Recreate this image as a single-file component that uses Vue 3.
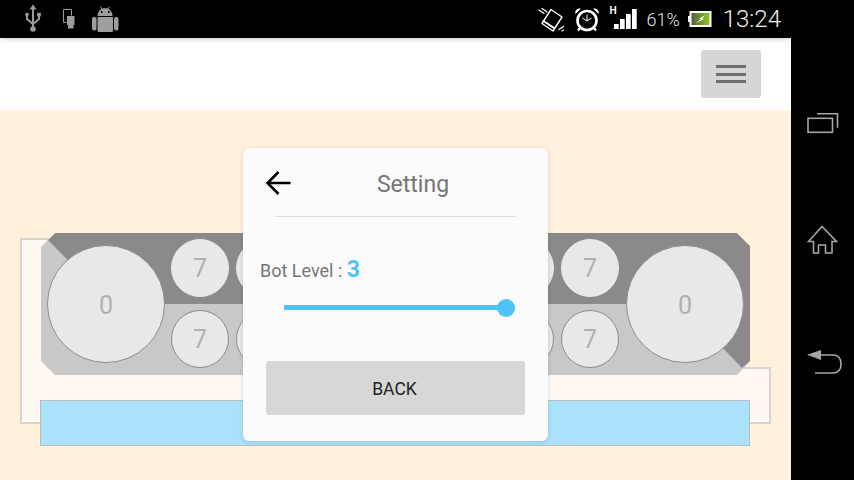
<script setup>
// Only the outermost pits show their count; the dialog covers the rest.
const pits = [7, null, null, null, null, null, 7]
</script>

<template>
  <div class="screen">
    <div class="main">
      <header class="status">
        <svg class="status-left" width="130" height="38" viewBox="0 0 130 38">
          <g class="usb" fill="none" stroke="#9c9c9c" stroke-width="2">
            <path d="M33 8v20M27 15v4l6 5M39 15v4l-6 5" />
            <path d="M33 4.500l3.500 5h-7z" fill="#9c9c9c" stroke="none" />
            <circle cx="27" cy="14.500" r="1.800" fill="#9c9c9c" stroke="none" />
            <rect x="37.200" y="12.800" width="3.600" height="3.600" fill="#9c9c9c" stroke="none" />
            <circle cx="33" cy="29" r="2.800" fill="#9c9c9c" stroke="none" />
          </g>
          <path d="M71.500 15.500V9.500h-8v13h3" fill="none" stroke="#9c9c9c" stroke-width="1" />
          <path d="M67 16h7.500v9h-1v3.500h-5.500V25h-1z" fill="#9c9c9c" />
          <g fill="#9e9e9e">
            <rect x="92" y="17" width="4.500" height="13.500" rx="2" />
            <rect x="114" y="17" width="4.500" height="13.500" rx="2" />
            <path d="M97.500 17h15.500v13.500a1.500 1.500 0 0 1-1.500 1.500h-12.500a1.500 1.500 0 0 1-1.500-1.500z" />
            <path d="M97.500 16c0-3.500 2-6 4-7l-1.500-2.300.6-.4 1.600 2.300c1.800-.6 3.800-.6 5.600 0l1.600-2.300.6.4-1.500 2.300c2 1 4 3.500 4 7z" />
          </g>
          <circle cx="101.700" cy="12" r="1" fill="#000" />
          <circle cx="108.800" cy="12" r="1" fill="#000" />
        </svg>
        <div class="status-right">
          <svg width="100" height="38" viewBox="540 0 100 38">
            <g fill="none" stroke="#fff" stroke-linecap="round">
              <path d="M553 9.500l11 7.500-9 14-11-7.500z" stroke-width="1.400" stroke-linejoin="round" />
              <path d="M545.500 21l10.500 7" stroke-width="2" />
              <path d="M541 10l5 3.500M544 8.500l5 3.500M561 29.500l4.500-3M564 31l1.500-1" stroke-width="1.300" />
            </g>
            <g fill="none" stroke="#fff">
              <circle cx="589" cy="20.500" r="9.500" stroke-width="2.600" />
              <path d="M589 14.500v6.500l-4.500-3M589 21l4.500-3" stroke-width="1" />
              <path d="M580 30.500l2-2.500M598 30.500l-2-2.500" stroke-width="2.200" />
            </g>
            <path d="M577.500 14c-1-3.500 1.500-6 5.500-5.500zM600.500 14c1-3.500-1.500-6-5.500-5.500z" fill="#fff" />
            <text x="611.500" y="14" class="net">H</text>
            <g fill="#fff">
              <rect x="616" y="24" width="4.700" height="5" />
              <rect x="622" y="19" width="4.700" height="10" />
              <rect x="628" y="14" width="4.700" height="15" />
              <rect x="634" y="9" width="4.700" height="20" />
            </g>
          </svg>
          <span class="percent">61%</span>
          <svg class="battery" width="24" height="16" viewBox="0 0 24 16">
            <defs>
              <linearGradient id="cell" x1="0" y1="0" x2="1" y2="0">
                <stop offset="0" stop-color="#55554a" />
                <stop offset=".4" stop-color="#6d8a2c" />
                <stop offset="1" stop-color="#8fcb26" />
              </linearGradient>
            </defs>
            <rect x="0" y="5" width="2.500" height="6" fill="#fff" />
            <rect x="2.500" y="1" width="20" height="14" fill="url(#cell)" stroke="#fff" stroke-width="2" />
            <path d="M8 11.500l4.500-3-1-1 6-3.500-3 3.500 1 1-7 3z" fill="#fff" />
          </svg>
          <span class="clock">13:24</span>
        </div>
      </header>

      <div class="toolbar">
        <button class="menu"><i></i><i></i><i></i></button>
      </div>

      <main class="game">
        <div class="tray tray-left"></div>
        <div class="tray tray-right"></div>
        <div class="tray-fill"></div>

        <section class="board">
          <div class="dark"></div>
          <div class="store"><span>0</span></div>
          <div class="rows">
            <div class="row">
              <div v-for="(p, i) in pits" :key="'t' + i" class="pit top"><span v-if="p">{{ p }}</span></div>
            </div>
            <div class="row">
              <div v-for="(p, i) in pits" :key="'b' + i" class="pit"><span v-if="p">{{ p }}</span></div>
            </div>
          </div>
          <div class="store store-right"><span>0</span></div>
        </section>

        <div class="bar"></div>

        <div class="dialog">
          <div class="head">
            <button class="arrow">
              <svg width="26" height="26" viewBox="0 0 26 26">
                <path d="M24.500 13H2M12.500 2L1.500 13 12.500 24" fill="none" stroke="#000" stroke-width="2.600" />
              </svg>
            </button>
            <h2>Setting</h2>
          </div>
          <div class="level">
            <span>Bot Level : </span><b>3</b>
          </div>
          <div class="slider"><div class="thumb"></div></div>
          <button class="back">BACK</button>
        </div>
      </main>
    </div>

    <aside class="nav">
      <svg width="63" height="480" viewBox="791 0 63 480" fill="none" stroke="#a6a6a6" stroke-width="1.600">
        <rect x="808" y="118.300" width="24.500" height="14" />
        <path d="M817 113.800h20.500v14" />
        <path d="M808.500 241.500L822 226.500l14.500 15h-4.500v11.500h-6.500v-8h-7v8H813.500v-11.500z" />
        <path d="M821 355h12c5 0 8 3 8 9s-3 9-8 9h-18" />
        <path d="M807 354.800l14-4.800v10z" fill="#a6a6a6" stroke="none" />
      </svg>
    </aside>
  </div>
</template>

<style scoped>
.screen {
  display: flex;
  width: 854px;
  height: 480px;
  background: #000;
  overflow: hidden;
  font-family: Roboto, sans-serif;
}
.main {
  width: 791px;
  display: flex;
  flex-direction: column;
}
.status {
  position: relative;
  z-index: 2;
  height: 38px;
  flex: none;
  display: flex;
  justify-content: space-between;
  background: #000;
  box-shadow: 0 1px 5px rgba(0, 0, 0, .22);
}
.status-right {
  display: flex;
  align-items: flex-start;
}
.percent {
  margin: 7px 0 0 8px;
  font-size: 18px;
  line-height: 25px;
  font-weight: 300;
  color: #e4e4e4;
}
.battery {
  margin: 11px 0 0 8px;
}
.clock {
  margin: 5px 10px 0 11px;
  font-size: 24px;
  line-height: 29px;
  font-weight: 300;
  color: #f2f2f2;
}
.net {
  font: 700 10px "Liberation Sans", sans-serif;
  fill: #fff;
}
.toolbar {
  height: 72px;
  flex: none;
  box-sizing: border-box;
  background: #fff;
  display: flex;
  justify-content: flex-end;
  padding: 12px 30px;
}
.menu {
  width: 60px;
  height: 48px;
  padding: 0;
  border: 0;
  border-radius: 3px;
  background: #d5d7d6;
  display: flex;
  flex-direction: column;
  align-items: center;
  justify-content: center;
  gap: 4.500px;
}
.menu i {
  width: 30px;
  height: 3px;
  background: #6e6f6f;
}
.game {
  position: relative;
  flex: 1;
  background: #fff1dc;
  padding: 123px 0 0 41px;
}
.tray {
  position: absolute;
  box-sizing: border-box;
  background: #fff8f2;
  border: 2px solid #d8d3cc;
}
.tray-left {
  left: 20px;
  top: 128px;
  width: 60px;
  height: 186px;
}
.tray-right {
  left: 710px;
  top: 257px;
  width: 61px;
  height: 57px;
}
.tray-fill {
  position: absolute;
  left: 30px;
  top: 260px;
  width: 700px;
  height: 40px;
  background: #fff8f2;
}
.board {
  position: relative;
  width: 709px;
  height: 142px;
  box-sizing: border-box;
  padding: 6px 5px 0 6px;
  display: flex;
  align-items: flex-start;
  gap: 6px;
  background: #c8c8c8;
  clip-path: polygon(14px 0, 696px 0, 709px 13px, 709px 128px, 696px 142px, 14px 142px, 0 128px, 0 14px);
}
.dark {
  position: absolute;
  inset: 0;
  background: #8a8a8a;
  clip-path: polygon(7px 7px, 14px 0, 696px 0, 709px 13px, 709px 128px, 701px 135px, 640px 71px, 70px 71px);
}
.store {
  position: relative;
  width: 118px;
  height: 118px;
  margin-top: 6px;
  padding-top: 2px;
  flex: none;
  box-sizing: border-box;
  border: 1px solid #8c8c8c;
  border-radius: 50%;
  background: #e8e8e8;
  display: flex;
  align-items: center;
  justify-content: center;
  font-size: 25px;
  color: #b0b0b0;
}
.store-right {
  margin-left: 1px;
}
.rows {
  position: relative;
  display: flex;
  flex-direction: column;
  gap: 13px;
  flex: none;
}
.row {
  display: flex;
  gap: 7px;
}
.pit {
  width: 58px;
  height: 58px;
  box-sizing: border-box;
  padding-top: 1px;
  border: 1px solid #8c8c8c;
  border-radius: 50%;
  background: #e8e8e8;
  display: flex;
  align-items: center;
  justify-content: center;
  font-size: 25px;
  color: #b0b0b0;
}
.pit.top {
  border-color: #e8e8e8;
}
.bar {
  width: 710px;
  height: 46px;
  margin: 25px 0 0 -1px;
  box-sizing: border-box;
  position: relative;
  background: #aae2fb;
  border: 1px solid #b9bcbc;
}
.dialog {
  position: absolute;
  left: 243px;
  top: 38px;
  width: 305px;
  height: 293px;
  box-sizing: border-box;
  border-radius: 6px;
  background: #fbfbfb;
  box-shadow: 0 1px 4px rgba(0, 0, 0, .14);
  display: flex;
  flex-direction: column;
}
.head {
  height: 69px;
  flex: none;
  box-sizing: border-box;
  margin: 0 32px;
  border-bottom: 1px solid #dddddd;
  display: flex;
  align-items: center;
}
.arrow {
  width: 44px;
  height: 40px;
  flex: none;
  margin: 2px 0 0 -9px;
  padding: 0;
  background: none;
  border: 0;
  text-align: left;
}
.arrow svg {
  display: block;
}
.head h2 {
  flex: 1;
  margin: 4px 0 0;
  text-align: center;
  font-size: 23px;
  font-weight: 400;
  color: #757575;
}
.level {
  margin: 38px 0 0 17px;
  height: 30px;
  font-size: 18px;
  line-height: 30px;
  color: #757575;
}
.level b {
  font-size: 23px;
  font-weight: 700;
  color: #4fc3f7;
}
.slider {
  position: relative;
  width: 231px;
  height: 5px;
  margin: 20px 0 0 41px;
  background: #4fc3f7;
}
.thumb {
  position: absolute;
  left: 213px;
  top: -6px;
  width: 18px;
  height: 18px;
  border-radius: 50%;
  background: #4fc3f7;
}
.back {
  width: 259px;
  height: 54px;
  flex: none;
  margin: 51px 0 0 23px;
  padding: 2px 2px 0 0;
  border: 0;
  border-radius: 3px;
  background: #d6d7d6;
  font-family: Roboto, sans-serif;
  font-size: 17.500px;
  color: #222;
}
.nav {
  width: 63px;
  flex: none;
}
.nav svg {
  display: block;
}
</style>
